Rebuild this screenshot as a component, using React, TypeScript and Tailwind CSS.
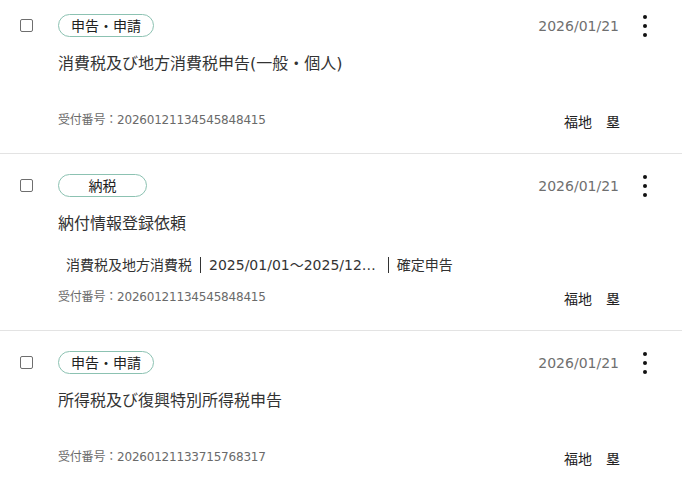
import React from "react";

type Item = {
  kind: string;
  date: string;
  title: string;
  details?: string[];
  receipt: string;
  name: string;
};

const items: Item[] = [
  {
    kind: "申告・申請",
    date: "2026/01/21",
    title: "消費税及び地方消費税申告(一般・個人)",
    receipt: "20260121134545848415",
    name: "福地　塁",
  },
  {
    kind: "納税",
    date: "2026/01/21",
    title: "納付情報登録依頼",
    details: ["消費税及地方消費税", "2025/01/01～2025/12…", "確定申告"],
    receipt: "20260121134545848415",
    name: "福地　塁",
  },
  {
    kind: "申告・申請",
    date: "2026/01/21",
    title: "所得税及び復興特別所得税申告",
    receipt: "20260121133715768317",
    name: "福地　塁",
  },
];

const MoreIcon = () => (
  <svg width="6" height="24" viewBox="0 0 6 24" fill="#111">
    <circle cx="3" cy="3" r="2" />
    <circle cx="3" cy="12" r="2" />
    <circle cx="3" cy="21" r="2" />
  </svg>
);

const Row = ({ item, first }: { item: Item; first: boolean }) => {
  return (
    <div
      className={`flex pl-5 pr-[34px] pb-[21px] border-b border-[#e3e3e3] ${
        first ? "pt-[14px]" : "pt-5"
      }`}
    >
      <div className="h-[23px] flex items-center">
        <div className="w-[13px] h-[13px] border border-[#6e6e6e] rounded-[2px] bg-white"></div>
      </div>

      <div className="flex-1 ml-[25px] flex flex-col">
        <div className="flex items-center justify-between">
          <span className="h-[23px] min-w-[89px] px-3 inline-flex items-center justify-center rounded-full border border-[#8cc2b2] text-[14px] leading-none text-[#222]">
            {item.kind}
          </span>
          <span className="text-[14px] leading-5 text-[#6f6f6f] mr-px">{item.date}</span>
        </div>

        <div className="mt-[15px] text-[16px] leading-6 text-[#333]">{item.title}</div>

        {item.details ? (
          <div className="mt-[21px] flex items-center text-[14px] leading-4 text-[#333]">
            {item.details.map((d, i) => (
              <span
                key={i}
                className={`px-2 ${i > 0 ? "border-l border-[#333]" : ""} ${
                  i === 1 ? "pr-3" : ""
                }`}
              >
                {d}
              </span>
            ))}
          </div>
        ) : null}

        <div
          className={`flex items-start justify-between ${
            item.details ? "mt-[15px]" : "mt-[35px]"
          }`}
        >
          <span className="text-[12px] leading-[18px] tracking-[-0.2px] text-[#6a6a6a]">
            受付番号：{item.receipt}
          </span>
          <span className="mt-px text-[14px] leading-5 text-[#222]">{item.name}</span>
        </div>
      </div>

      <div className="ml-[22px] h-[23px] flex items-center">
        <MoreIcon />
      </div>
    </div>
  );
};

export default function App() {
  return (
    <div className="w-[682px] h-[484px] overflow-hidden bg-white font-['DejaVu_Sans','Noto_Sans_CJK_JP',sans-serif]">
      {items.map((item, i) => (
        <Row key={i} item={item} first={i === 0} />
      ))}
    </div>
  );
}
